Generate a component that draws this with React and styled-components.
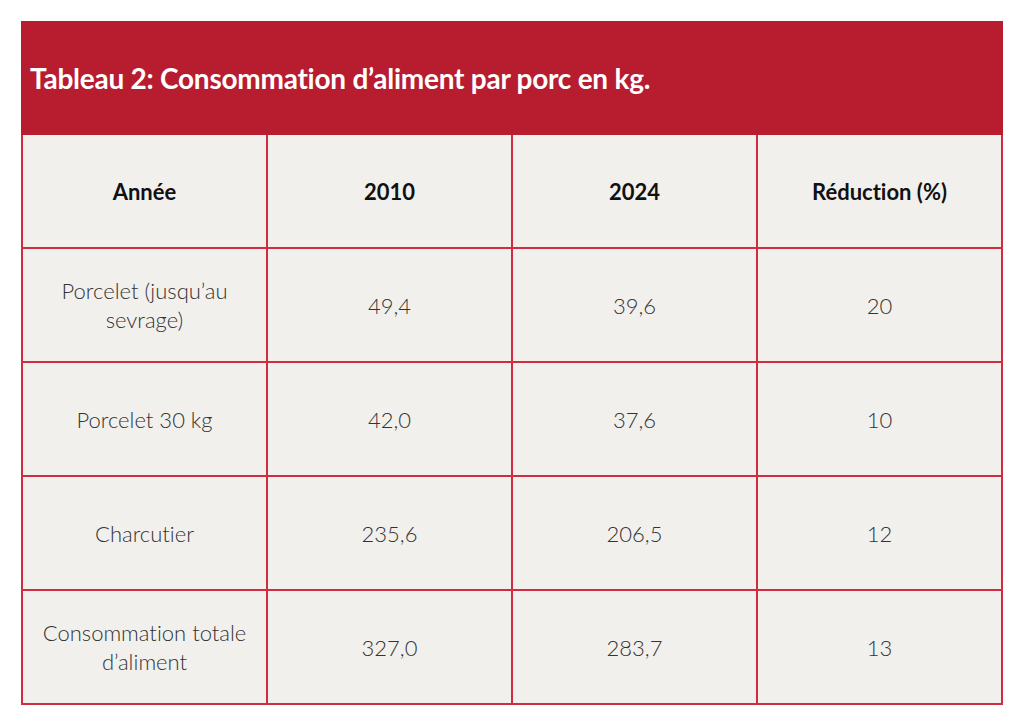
import React from "react";
import styled, { createGlobalStyle } from "styled-components";

const Global = createGlobalStyle`
  html, body { margin: 0; padding: 0; background: #ffffff; }
  body { font-family: Lato, "Open Sans", sans-serif; }
`;

const Page = styled.div`
  padding: 21px 21px 21px 21px;
  width: 982px;
`;

const Table = styled.div`
  width: 982px;
  display: flex;
  flex-direction: column;
`;

const TitleBar = styled.div`
  background: #b71c2f;
  height: 114px;
  display: flex;
  align-items: center;
  padding: 0 9px;
  box-sizing: border-box;
`;

const Title = styled.h2`
  margin: 0;
  color: #ffffff;
  font-family: Lato, sans-serif;
  font-weight: 700;
  font-size: 28px;
  letter-spacing: -0.25px;
  font-variant-ligatures: none;
  white-space: nowrap;
`;

const Grid = styled.div`
  display: grid;
  grid-template-columns: repeat(4, 1fr);
  grid-auto-rows: 112px;
  gap: 2px;
  background: #cf2b41;
  padding: 0 2px 2px 2px;
`;

const Cell = styled.div`
  background: #f2f0ed;
  display: flex;
  align-items: center;
  justify-content: center;
  text-align: center;
  padding: 0 16px;
  font-family: Lato, sans-serif;
  font-size: 22px;
  line-height: 29px;
  font-variant-ligatures: none;
  font-weight: ${(p) => (p.$head ? 700 : 300)};
  color: ${(p) => (p.$head ? "#111111" : "#333333")};
`;

const head = ["Année", "2010", "2024", "Réduction (%)"];
const rows = [
  ["Porcelet (jusqu’au sevrage)", "49,4", "39,6", "20"],
  ["Porcelet 30 kg", "42,0", "37,6", "10"],
  ["Charcutier", "235,6", "206,5", "12"],
  ["Consommation totale d’aliment", "327,0", "283,7", "13"],
];

export default function App() {
  return (
    <Page>
      <Global />
      <Table>
        <TitleBar>
          <Title>Tableau 2: Consommation d’aliment par porc en kg.</Title>
        </TitleBar>
        <Grid>
          {head.map((h) => (
            <Cell key={h} $head>
              {h}
            </Cell>
          ))}
          {rows.map((r, i) =>
            r.map((c, j) => <Cell key={i + "-" + j}>{c}</Cell>)
          )}
        </Grid>
      </Table>
    </Page>
  );
}
